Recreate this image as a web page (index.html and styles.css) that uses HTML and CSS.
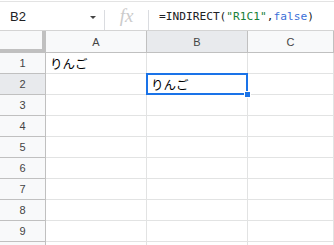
FILE: index.html
```html
<!DOCTYPE html>
<html lang="ja">
<head>
    <meta charset="UTF-8">
    <title>Sheet</title>
    <link rel="stylesheet" href="styles.css">
</head>
<body>

<div class="formula-bar">
    <div class="name-box">
        <span>B2</span>
        <span class="arrow"></span>
    </div>
    <div class="sep"></div>
    <div class="fx">fx</div>
    <div class="sep"></div>
    <div class="formula">=INDIRECT(<span class="str">"R1C1"</span>,<span class="kw">false</span>)</div>
</div>

<div class="grid">
    <div class="corner"></div>
    <div class="col-head">A</div>
    <div class="col-head active">B</div>
    <div class="col-head">C</div>

    <div class="row-head">1</div>
    <div class="cell">りんご</div>
    <div class="cell"></div>
    <div class="cell"></div>

    <div class="row-head active">2</div>
    <div class="cell"></div>
    <div class="cell selected">りんご</div>
    <div class="cell"></div>

    <div class="row-head">3</div><div class="cell"></div><div class="cell"></div><div class="cell"></div>
    <div class="row-head">4</div><div class="cell"></div><div class="cell"></div><div class="cell"></div>
    <div class="row-head">5</div><div class="cell"></div><div class="cell"></div><div class="cell"></div>
    <div class="row-head">6</div><div class="cell"></div><div class="cell"></div><div class="cell"></div>
    <div class="row-head">7</div><div class="cell"></div><div class="cell"></div><div class="cell"></div>
    <div class="row-head">8</div><div class="cell"></div><div class="cell"></div><div class="cell"></div>
    <div class="row-head">9</div><div class="cell"></div><div class="cell"></div><div class="cell"></div>
    <!-- row 10 only peeks in at the bottom edge -->
    <div class="row-head"></div><div class="cell"></div><div class="cell"></div><div class="cell"></div>
</div>

</body>
</html>
```

FILE: styles.css
```css
body {
    margin: 0;
    background: #fff;
    font-family: "Liberation Sans", Arial, "Noto Sans CJK JP", sans-serif;
    color: #202124;
    overflow: hidden;
}
.formula-bar {
    display: flex;
    align-items: center;
    height: 28px;
    margin-top: 1px;
    border-top: 1px solid #e3e3e3;
    border-bottom: 1px solid #d4d4d4;
}
.name-box {
    display: flex;
    align-items: center;
    justify-content: space-between;
    width: 94px;
    padding-left: 10px;
    font-size: 13px;
}
.arrow {
    width: 0;
    height: 0;
    margin-right: 8px;
    margin-top: 2px;
    border-left: 3px solid transparent;
    border-right: 3px solid transparent;
    border-top: 3px solid #444;
}
.sep {
    width: 1px;
    height: 20px;
    margin-top: 8px;
    background: #dadce0;
}
.fx {
    width: 43px;
    text-align: center;
    font-family: "Liberation Serif", serif;
    font-style: italic;
    font-size: 19px;
    color: #cbcbcb;
}
.formula {
    padding-left: 10px;
    font-family: "DejaVu Sans Mono", monospace;
    font-size: 11.2px;
    color: #202124;
}
.formula .str {
    color: #188038;
}
.formula .kw {
    color: #3b6fd8;
}
.grid {
    display: grid;
    grid-template-columns: 46px 101px 101px 1fr;
    grid-template-rows: 22px;
    grid-auto-rows: 21px;
}
.corner {
    background: #f8f9fa;
    border-right: 4px solid #c0c0c0;
    border-bottom: 4px solid #c0c0c0;
    height: 18px;
    box-sizing: content-box;
}
.col-head {
    display: flex;
    align-items: center;
    justify-content: center;
    background: #f8f9fa;
    border-right: 1px solid #c0c0c0;
    border-bottom: 1px solid #c0c0c0;
    font-size: 11px;
    color: #444;
    padding-top: 1px;
}
.col-head.active {
    background: #e8eaed;
}
.row-head {
    display: flex;
    align-items: center;
    justify-content: center;
    background: #f8f9fa;
    border-right: 1px solid #c0c0c0;
    border-bottom: 1px solid #c0c0c0;
    font-size: 11px;
    color: #444;
}
.row-head.active {
    background: #e8eaed;
}
.cell {
    position: relative;
    display: flex;
    align-items: center;
    padding-left: 4px;
    border-right: 1px solid #e2e3e3;
    border-bottom: 1px solid #e2e3e3;
    font-family: "Noto Sans CJK JP", sans-serif;
    font-size: 12.5px;
    color: #000;
}
.cell.selected::after {
    content: "";
    position: absolute;
    left: -1px;
    top: -1px;
    right: -1px;
    bottom: -1px;
    border: 2px solid #1a73e8;
}
.cell.selected::before {
    content: "";
    position: absolute;
    right: -4px;
    bottom: -4px;
    width: 5px;
    height: 5px;
    background: #1a73e8;
    border: 1px solid #fff;
    z-index: 1;
}
```
